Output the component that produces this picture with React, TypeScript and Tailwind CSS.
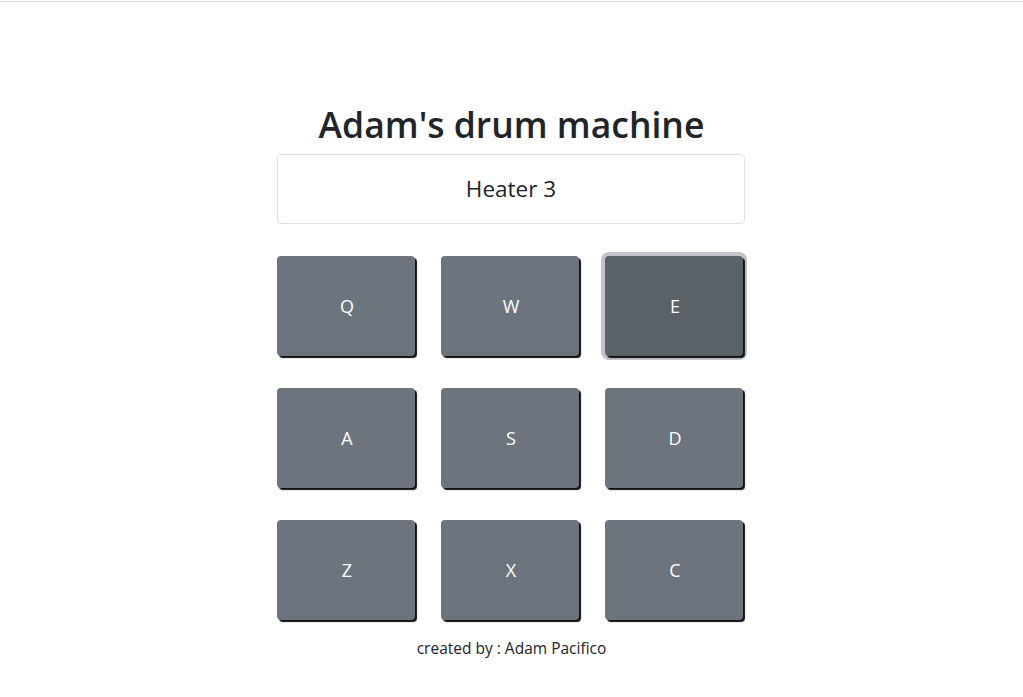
import React, { useState } from "react";

const pads = [
  { key: "Q", name: "Heater 1" },
  { key: "W", name: "Heater 2" },
  { key: "E", name: "Heater 3" },
  { key: "A", name: "Heater 4" },
  { key: "S", name: "Clap" },
  { key: "D", name: "Open HH" },
  { key: "Z", name: "Kick n' Hat" },
  { key: "X", name: "Kick" },
  { key: "C", name: "Closed HH" },
];

export default function App() {
  const [active, setActive] = useState("E");
  const current = pads.find((p) => p.key === active);

  return (
    <div
      className="min-h-screen bg-white text-[#212529]"
      style={{ fontFamily: '"Open Sans", "Noto Sans", sans-serif' }}
    >
      <div className="h-[2px] border-b border-[#dadada]" />
      <div className="flex flex-col items-center pt-[101px]">
        <h1 className="text-[35.5px] leading-[1.2] font-semibold mb-[8px]">
          Adam's drum machine
        </h1>
        <div className="w-[469px]">
          <div className="w-[468px] h-[70px] border border-[#dee2e6] rounded flex items-center justify-center text-[22.5px]">
            {current?.name}
          </div>
          <div className="grid grid-cols-[138px_138px_138px] gap-x-[26px] gap-y-[32px] mt-[32px]">
            {pads.map((p) => (
              <button
                key={p.key}
                onClick={() => setActive(p.key)}
                className={
                  p.key === active
                    ? "h-[100px] pt-[2px] pl-[2px] rounded text-white text-[18px] bg-[#5a6268] shadow-[2px_2px_1px_#111,0_0_0_4px_rgba(130,138,145,0.5)]"
                    : "h-[100px] pt-[2px] pl-[2px] rounded text-white text-[18px] bg-[#6c757d] shadow-[2px_2px_1px_#111]"
                }
              >
                {p.key}
              </button>
            ))}
          </div>
        </div>
        <p className="mt-[16px] text-[15.5px] leading-[24px]">created by : Adam Pacifico</p>
      </div>
    </div>
  );
}
